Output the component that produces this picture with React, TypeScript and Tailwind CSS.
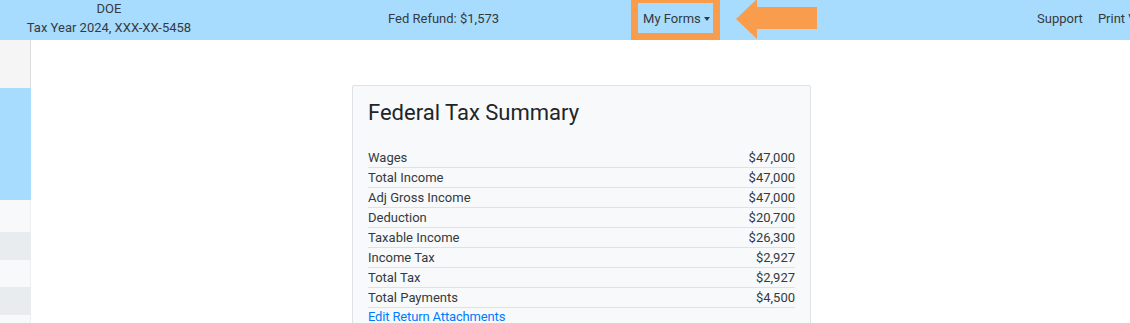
import React from "react";

const rows: [string, string][] = [
  ["Wages", "$47,000"],
  ["Total Income", "$47,000"],
  ["Adj Gross Income", "$47,000"],
  ["Deduction", "$20,700"],
  ["Taxable Income", "$26,300"],
  ["Income Tax", "$2,927"],
  ["Total Tax", "$2,927"],
  ["Total Payments", "$4,500"],
];

export default function App() {
  return (
    <div
      className="w-[1130px] h-[323px] overflow-hidden bg-white text-[#343a40] flex flex-col"
      style={{ fontFamily: "Roboto, 'Liberation Sans', sans-serif" }}
    >
      <header className="relative h-[40px] shrink-0 bg-[#a8dcfe] flex items-center text-[13px] whitespace-nowrap">
        <div className="w-[218px] flex flex-col items-center leading-[19px] -mt-[5px]">
          <span>DOE</span>
          <span>Tax Year 2024, XXX-XX-5458</span>
        </div>
        <div className="ml-[170px] -mt-[2px]">Fed Refund: $1,573</div>
        <div className="ml-[132px] self-start -mt-[4px] h-[44px] w-[89px] border-[7px] border-[#f99d4c] flex items-center pl-[5px] pt-[1px]">
          <span>My Forms</span>
          <span className="ml-[3px] inline-block w-0 h-0 border-l-[3.5px] border-r-[3.5px] border-t-[4px] border-l-transparent border-r-transparent border-t-[#343a40]" />
        </div>
        <svg className="ml-[16px] self-start" width="81" height="40" viewBox="0 0 81 40">
          <polygon points="0,19 21,-1 21,7 81,7 81,29 21,29 21,39" fill="#f99d4c" />
        </svg>
        <div className="ml-auto -mt-[2px] flex gap-[15px] w-[93px] overflow-hidden">
          <span>Support</span>
          <span>Print View</span>
        </div>
      </header>
      <div className="flex flex-1 min-h-0">
        <aside className="w-[31px] shrink-0 flex flex-col">
          <div className="h-[48px] bg-[#f5f5f5] border-r border-[#dcdcdc]" />
          <div className="h-[112px] bg-[#a8dcfe]" />
          <div className="h-[32px] bg-[#f8f9fa] border-r border-[#eef0f2]" />
          <div className="h-[28px] bg-[#e9ecef]" />
          <div className="h-[27px] bg-[#f8f9fa] border-r border-[#eef0f2]" />
          <div className="h-[28px] bg-[#e9ecef]" />
          <div className="flex-1 bg-[#f8f9fa] border-r border-[#eef0f2]" />
        </aside>
        <main className="flex-1 pt-[45px] pl-[321px]">
          <div className="w-[459px] border border-[#dfe2e6] bg-[#f8f9fa] pt-[12px] px-[15px] rounded-[2px]">
            <h1 className="text-[22px] leading-[30px] text-[#212529] mb-[20px]">Federal Tax Summary</h1>
            <div className="text-[13px] text-[#343a40]">
              {rows.map(([k, v]) => (
                <div key={k} className="flex justify-between h-[20px] leading-[19px] border-b border-[#dee2e6]">
                  <span>{k}</span>
                  <span>{v}</span>
                </div>
              ))}
              <div className="h-[20px] leading-[18px] text-[#007bff] tracking-[-0.15px]">Edit Return Attachments</div>
            </div>
          </div>
        </main>
      </div>
    </div>
  );
}
